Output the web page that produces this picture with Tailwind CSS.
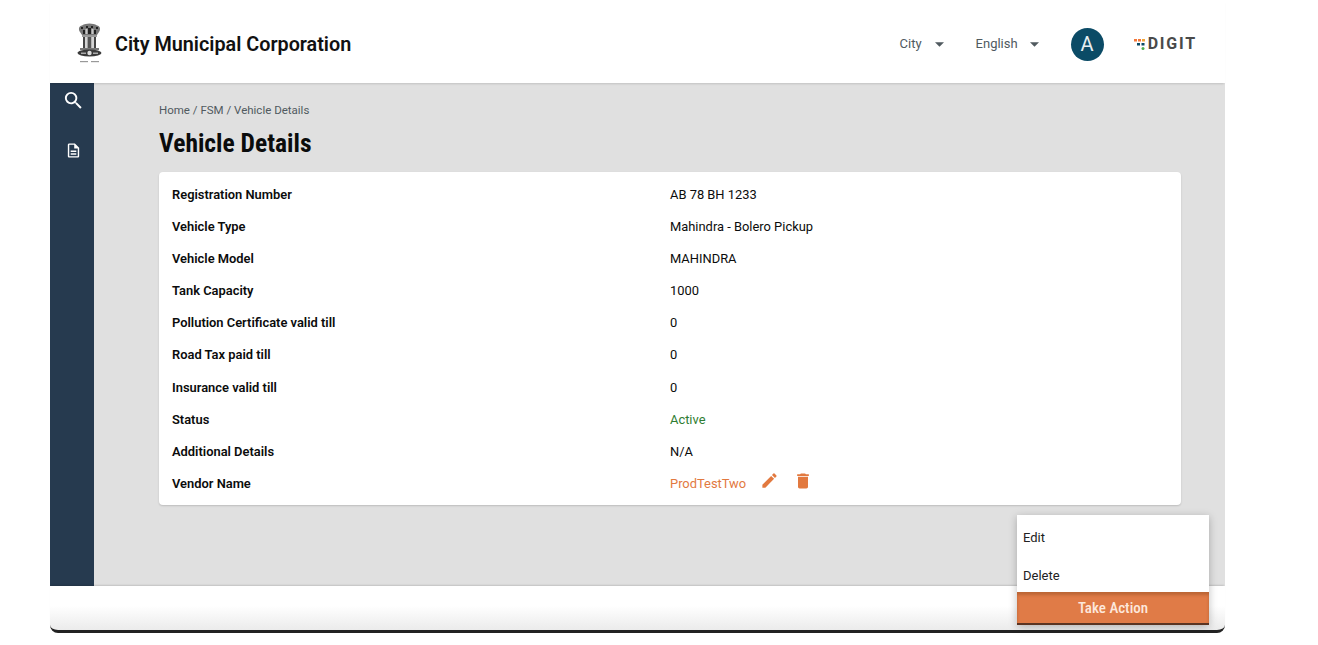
<!DOCTYPE html>
<html lang="en">
<head>
    <meta charset="UTF-8">
    <title>Vehicle Details</title>
    <script src="https://cdn.jsdelivr.net/npm/@tailwindcss/browser@4"></script>
</head>
<body class="bg-white font-[Roboto,sans-serif] h-[645px] overflow-hidden relative">

    <div class="ml-[50px] w-[1175px]">

        <!-- Header -->
        <header class="relative z-10 h-[83px] bg-white flex items-center pl-[27px] pr-[28px] pt-[5px] shadow-[0_2px_2px_-1px_rgba(0,0,0,0.14)]">
            <svg class="w-[25px] h-[40px] mr-[13px] -mt-[3px] blur-[0.4px]" viewBox="0 0 25 40">
                <path d="M3 9C1 6 2 3 5 2.500 7 .5 10 1 12.500 .5 15 1 18 .5 20 2.500 23 3 24 6 22 9L20 12H5z" fill="#777"/>
                <path d="M4 4h2v2H4zm5-1h2v2H9zm5 0h2v2h-2zm5 1h2v2h-2zM6 7h2v4H6zm5-2h3v6h-3zm6 2h2v4h-2z" fill="#222"/>
                <path d="M8.500 6h2v5h-2zm6 0h2v5h-2z" fill="#c8c8c8"/>
                <rect x="5" y="12" width="15" height="2" fill="#999"/>
                <rect x="6" y="14" width="2" height="11" fill="#444"/>
                <rect x="8" y="14" width="2.300" height="11" fill="#d4d4d4"/>
                <rect x="10.500" y="14" width="4" height="11" fill="#555"/>
                <rect x="14.700" y="14" width="2.300" height="11" fill="#d4d4d4"/>
                <rect x="17" y="14" width="2" height="11" fill="#444"/>
                <rect x="3" y="25" width="19" height="2" fill="#777"/>
                <ellipse cx="12.500" cy="30" rx="12" ry="3.500" fill="#3a3a3a"/>
                <circle cx="12.500" cy="30" r="2.200" fill="#ddd"/>
                <rect x="4" y="29.500" width="5" height="1.500" fill="#aaa"/>
                <rect x="16" y="29.500" width="5" height="1.500" fill="#aaa"/>
                <rect x="3" y="38" width="8" height="1.200" fill="#999"/>
                <rect x="14" y="38" width="8" height="1.200" fill="#999"/>
            </svg>
            <h1 class="text-[19.8px] font-semibold text-[#111] leading-none mt-[2px]">City Municipal Corporation</h1>

            <div class="ml-auto flex items-center text-[#505a5f] text-[13px]">
                <span>City</span>
                <svg class="w-[9px] h-[5px] ml-[13px]" viewBox="0 0 10 5"><path d="M0 0h10L5 5z" fill="#505a5f"/></svg>
                <span class="ml-[32px]">English</span>
                <svg class="w-[9px] h-[5px] ml-[12px]" viewBox="0 0 10 5"><path d="M0 0h10L5 5z" fill="#505a5f"/></svg>
                <span class="ml-[32px] w-[33px] h-[33px] rounded-full bg-[#0b4b66] text-[#e8eef1] text-[20px] flex items-center justify-center">A</span>
                <span class="ml-[30px] flex items-center">
                    <svg class="w-[11px] h-[12px] mr-[3px]" viewBox="0 0 11 12">
                        <rect x="0" y="1" width="3" height="2.500" fill="#f47738"/>
                        <rect x="4" y="1" width="3" height="2.500" fill="#f47738"/>
                        <rect x="8" y="1" width="3" height="2.500" fill="#f4a638"/>
                        <rect x="3" y="5" width="3" height="2.500" fill="#0b4b66"/>
                        <rect x="7.500" y="5" width="3" height="2.500" fill="#0b4b66"/>
                        <circle cx="9" cy="10.500" r="1.500" fill="#4caf50"/>
                    </svg>
                    <span class="text-[16px] font-bold tracking-[1.8px] text-[#4a4a4a] leading-none">DIGIT</span>
                </span>
            </div>
        </header>

        <!-- Body -->
        <div class="flex h-[503px]">
            <aside class="w-[44px] bg-[#263a4f] flex flex-col items-center pt-[6px] text-white">
                <svg class="w-[23px] h-[23px] ml-[3px]" viewBox="0 0 24 24" fill="#fff">
                    <path d="M15.500 14h-.79l-.28-.27A6.470 6.470 0 0 0 16 9.500 6.500 6.500 0 1 0 9.500 16c1.610 0 3.090-.59 4.230-1.570l.27.28v.79l5 4.990L20.490 19l-4.990-5zm-6 0C7.010 14 5 11.990 5 9.500S7.010 5 9.500 5 14 7.010 14 9.500 11.990 14 9.500 14z"/>
                </svg>
                <svg class="w-[17px] h-[17px] mt-[30px] ml-[3px]" viewBox="0 0 24 24" fill="#fff">
                    <path d="M14 2H6c-1.100 0-2 .9-2 2v16c0 1.100.9 2 2 2h12c1.100 0 2-.9 2-2V8l-6-6zm4 18H6V4h7v5h5v11zM8 12h8v2H8zm0 4h8v2H8z"/>
                </svg>
            </aside>

            <main class="flex-1 bg-[#e0e0e0] pl-[65px] pr-[44px] pt-[20px]">
                <nav class="text-[11.5px] text-[#505a5f] leading-[14px]">Home / FSM / Vehicle Details</nav>
                <h2 class="mt-[10px] text-[25.5px] font-bold text-[#0b0c0c] leading-[32px] [font-stretch:75%]">Vehicle Details</h2>

                <section class="mt-[13px] h-[333px] bg-white rounded-[4px] shadow-[0_1px_2px_rgba(0,0,0,0.16)] pl-[13px] pt-[7px] text-[12.9px] leading-[32.1px]">
                    <div class="grid grid-cols-[498px_1fr] text-[#0b0c0c]">
                        <div class="font-semibold">Registration Number</div><div>AB 78 BH 1233</div>
                        <div class="font-semibold">Vehicle Type</div><div>Mahindra - Bolero Pickup</div>
                        <div class="font-semibold">Vehicle Model</div><div>MAHINDRA</div>
                        <div class="font-semibold">Tank Capacity</div><div>1000</div>
                        <div class="font-semibold">Pollution Certificate valid till</div><div>0</div>
                        <div class="font-semibold">Road Tax paid till</div><div>0</div>
                        <div class="font-semibold">Insurance valid till</div><div>0</div>
                        <div class="font-semibold">Status</div><div class="text-[#2e7d32]">Active</div>
                        <div class="font-semibold">Additional Details</div><div>N/A</div>
                        <div class="font-semibold">Vendor Name</div>
                        <div class="flex items-center text-[#e2793f]">
                            <span>ProdTestTwo</span>
                            <svg class="w-[19px] h-[19px] ml-[14px] -mt-[6px]" viewBox="0 0 24 24" fill="#e2793f"><path d="M3 17.250V21h3.750L17.810 9.940l-3.750-3.750L3 17.250zM20.710 7.040a1 1 0 0 0 0-1.410l-2.340-2.340a1 1 0 0 0-1.410 0l-1.830 1.830 3.750 3.750 1.830-1.830z"/></svg>
                            <svg class="w-[20px] h-[20px] ml-[14px] -mt-[5px]" viewBox="0 0 24 24" fill="#e2793f"><path d="M6 19c0 1.100.9 2 2 2h8c1.100 0 2-.9 2-2V7H6v12zM19 4h-3.500l-1-1h-5l-1 1H5v2h14V4z"/></svg>
                        </div>
                    </div>
                </section>
            </main>
        </div>

        <!-- Footer -->
        <footer class="relative h-[47px] rounded-b-[8px] border-b-[3px] border-[#222] bg-gradient-to-b from-white from-45% to-[#ebebeb] shadow-[0_-2px_2px_-1px_rgba(0,0,0,0.14)]"></footer>
    </div>

    <!-- Action menu -->
    <div class="absolute z-20 left-[1017px] top-[515px] w-[192px] shadow-[0_2px_8px_rgba(0,0,0,0.25)]">
        <div class="h-[77px] bg-white text-[13px] text-[#222] pl-[6px]">
            <div class="h-[45px] flex items-center">Edit</div>
            <div class="h-[32px] flex items-center pb-[11px] pt-[10px]">Delete</div>
        </div>
        <button class="w-full h-[33px] pt-[2px] bg-[#e07b47] text-[#fde8dc] text-[15px] font-medium [font-stretch:75%] border-b-[2px] border-[#5a3422] shadow-[inset_0_3px_3px_rgba(120,60,20,0.35)]">Take Action</button>
    </div>

</body>
</html>
